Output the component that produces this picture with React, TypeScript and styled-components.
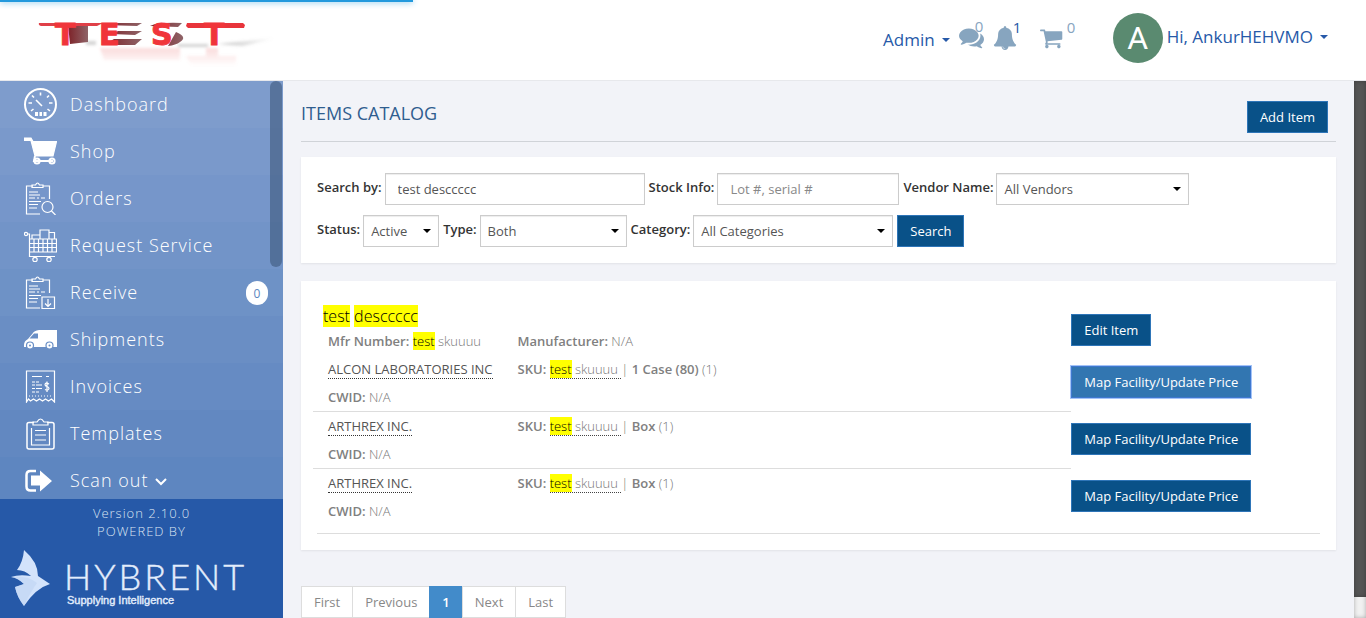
import React from "react";
import styled, { createGlobalStyle } from "styled-components";

const GlobalStyle = createGlobalStyle`
  *, *::before, *::after { box-sizing: border-box; }
  body {
    margin: 0;
    background: #f2f3f8;
    color: #777;
    font-family: "Open Sans", "Noto Sans", sans-serif;
    font-size: 13px;
  }
  button, input, select { font-family: inherit; font-size: inherit; }
  a { color: inherit; text-decoration: none; }
`;

const Page = styled.div`
  display: flex;
  flex-direction: column;
  height: 100vh;
  overflow: hidden;
`;

/* ---------- header ---------- */

const Progress = styled.div`
  position: absolute;
  top: 0;
  left: 0;
  width: 30.25%;
  height: 2px;
  background: #2299dd;
  box-shadow: 0 0 6px #2299dd;
`;

const Header = styled.header`
  display: flex;
  align-items: center;
  justify-content: space-between;
  flex: none;
  height: 81px;
  padding: 0 38px 5px;
  background: #fff;
  border-bottom: 1px solid #e7e8ec;
`;

const HeaderTools = styled.div`
  display: flex;
  align-items: center;
`;

const MenuButton = styled.button`
  display: flex;
  align-items: center;
  gap: 7px;
  padding: 0 0 2px;
  border: 0;
  background: none;
  color: #2659a8;
  font-size: 17px;
  line-height: 24px;
`;

const AdminMenu = styled(MenuButton)`
  margin: 6px 9px 0 0;
`;

const Caret = styled.span`
  border: 4px solid transparent;
  border-top-color: currentColor;
  border-bottom: 0;
`;

const IconButton = styled.button<{ $gap: number }>`
  position: relative;
  display: flex;
  margin-right: ${(p) => p.$gap}px;
  padding: 0;
  border: 0;
  background: none;
  color: #87a5bf;
`;

const Count = styled.span<{ $left: number; $active?: boolean }>`
  position: absolute;
  top: -9px;
  left: ${(p) => p.$left}px;
  color: ${(p) => (p.$active ? "#2659a8" : "#87a5bf")};
  font-size: 15px;
  line-height: 20px;
`;

const Avatar = styled.span`
  display: flex;
  align-items: center;
  justify-content: center;
  width: 50px;
  height: 50px;
  margin-right: 4px;
  border-radius: 50%;
  background: #5a8a70;
  color: #fff;
  font-family: Roboto, sans-serif;
  font-size: 32px;
`;

/* ---------- sidebar ---------- */

const Body = styled.div`
  display: flex;
  flex: 1;
  min-height: 0;
`;

const Sidebar = styled.aside`
  position: relative;
  display: flex;
  flex-direction: column;
  flex: none;
  width: 283px;
  color: #fff;
`;

const Nav = styled.nav`
  flex: 1;
  min-height: 0;
  overflow: hidden;
`;

const NavLink = styled.a<{ $bg: string }>`
  display: flex;
  align-items: center;
  height: 47px;
  padding: 0 15px 0 24px;
  background: ${(p) => p.$bg};
  color: #fff;
  font-size: 18px;
  font-weight: 300;
  letter-spacing: 1px;
`;

const NavText = styled.span`
  padding-bottom: 2px;
`;

const NavIcon = styled.svg`
  flex: none;
  width: 33px;
  height: 33px;
  margin-right: 13px;
  fill: none;
  stroke: #fff;
  stroke-width: 1.2;
`;

const NavBadge = styled.span`
  margin-left: auto;
  width: 22px;
  padding-top: 2px;
  border-radius: 11px;
  background: #fff;
  color: #5c86c0;
  font-size: 12px;
  font-weight: 400;
  line-height: 22px;
  letter-spacing: 0;
  text-align: center;
`;

const SideThumb = styled.div`
  position: absolute;
  top: 0;
  right: 1px;
  width: 12px;
  height: 186px;
  border-radius: 6px;
  background: rgba(62, 88, 124, 0.6);
`;

const SideFooter = styled.footer`
  flex: none;
  height: 119px;
  padding-top: 5px;
  background: #2659a8;
  color: #dbe4f2;
  font-size: 13px;
  font-weight: 300;
  line-height: 18px;
  letter-spacing: 1px;
  text-align: center;
`;

const Brand = styled.svg`
  display: block;
  width: 260px;
  height: 66px;
  margin-top: 6px;
`;

/* ---------- main ---------- */

const Main = styled.main`
  flex: 1;
  min-width: 0;
  padding: 0 18px;
`;

const TitleBar = styled.div`
  display: flex;
  align-items: flex-start;
  justify-content: space-between;
  padding: 20px 8px 8px 0;
  border-bottom: 1px solid #d0d3d8;
`;

const Title = styled.h1`
  margin: 0;
  color: #2f5d8f;
  font-size: 18px;
  font-weight: 400;
  line-height: 24px;
`;

const Button = styled.button<{ $focused?: boolean }>`
  height: 32px;
  padding: 0 12px;
  border: 1px solid ${(p) => (p.$focused ? "#3f78cf" : "#2e75b8")};
  background: ${(p) => (p.$focused ? "#3276b1" : "#095188")};
  box-shadow: ${(p) => (p.$focused ? "0 0 0 1px #a3c3f7" : "none")};
  color: #fff;
  font-weight: 500;
  line-height: 18px;
  white-space: nowrap;
`;

const Card = styled.section`
  margin-top: 15px;
  padding: 16px;
  background: #fff;
  box-shadow: 0 1px 2px rgba(0, 0, 0, 0.07);
`;

const ResultsCard = styled(Card)`
  margin-top: 18px;
  padding-top: 24px;
`;

const FilterRow = styled.div`
  display: flex;
  gap: 4px;
  & + & { margin-top: 10px; }
`;

const Field = styled.div`
  display: flex;
  gap: 3px;
`;

const Label = styled.label`
  color: #333;
  font-weight: 600;
  line-height: 28px;
  white-space: nowrap;
`;

const TextInput = styled.input<{ $w: number }>`
  width: ${(p) => p.$w}px;
  height: 32px;
  padding: 0 12px;
  border: 1px solid #ccc;
  box-shadow: inset 0 1px 1px rgba(0, 0, 0, 0.075);
  background: #fff;
  color: #555;
  &::placeholder { color: #888; }
`;

const SelectWrap = styled.span<{ $w: number }>`
  position: relative;
  width: ${(p) => p.$w}px;
`;

const Select = styled.select`
  appearance: none;
  width: 100%;
  height: 32px;
  padding: 0 20px 0 7px;
  border: 1px solid #ccc;
  border-radius: 0;
  box-shadow: inset 0 1px 1px rgba(0, 0, 0, 0.075);
  background: #fff;
  color: #555;
`;

const SelectCaret = styled(Caret)`
  position: absolute;
  top: 14px;
  right: 8px;
  color: #000;
  pointer-events: none;
`;

const List = styled.div`
  margin: 0 -4px;
`;

const Row = styled.div`
  display: grid;
  grid-template-columns: 3fr 1fr;
`;

const Details = styled.div<{ $line?: boolean }>`
  display: grid;
  grid-template-columns: 1fr 3fr;
  border-bottom: ${(p) => (p.$line ? "1px solid #ddd" : "0")};
  line-height: 28px;
  font-weight: 300;
`;

const Cell = styled.div`
  padding-left: 15px;
  white-space: nowrap;
`;

const Action = styled.div`
  padding-top: 11px;
`;

const EditAction = styled.div`
  padding-top: 9px;
`;

const ItemTitle = styled.h2`
  margin: 0;
  padding-left: 10px;
  font-size: 16px;
  font-weight: 300;
  line-height: 22px;
`;

const Mark = styled.mark`
  background: #ff0;
  color: #000;
`;

const Strong = styled.strong`
  color: #808080;
  font-weight: 600;
`;

const VendorLink = styled.a`
  border-bottom: 1px dotted #333;
  color: #555;
  font-weight: 400;
`;

const SkuLink = styled.a`
  border-bottom: 1px dotted #444;
`;

const Rule = styled.hr`
  margin: 8px 0 0;
  border: 0;
  border-top: 1px solid #ddd;
`;

const Pager = styled.nav`
  display: flex;
  margin-top: 36px;
`;

const PageLink = styled.a<{ $active?: boolean }>`
  height: 32px;
  padding: 0 12px;
  border: 1px solid ${(p) => (p.$active ? "#428bca" : "#ddd")};
  background: ${(p) => (p.$active ? "#428bca" : "#fff")};
  color: ${(p) => (p.$active ? "#fff" : "#888")};
  font-weight: ${(p) => (p.$active ? 600 : 400)};
  line-height: 30px;
  & + & { margin-left: -1px; }
`;

const ScrollTrack = styled.div`
  flex: none;
  width: 12px;
  background: #f1f1f1;
  box-shadow: inset 0 0 4px rgba(0, 0, 0, 0.3);
`;

const ScrollThumb = styled.div`
  height: 96%;
  background: #555;
  box-shadow: inset 0 0 4px rgba(0, 0, 0, 0.3);
`;

/* ---------- drawings ---------- */

const TestLogo = () => (
  <svg width="245" height="60" viewBox="0 0 245 60" role="img" aria-label="TEST">
    <defs>
      <linearGradient id="shade" x1="0" x2="1">
        <stop offset="0" stopColor="#888" stopOpacity="0.5" />
        <stop offset="1" stopColor="#888" stopOpacity="0" />
      </linearGradient>
      <linearGradient id="glow" x1="0" x2="0" y1="0" y2="1">
        <stop offset="0" stopColor="#e88" stopOpacity="0.3" />
        <stop offset="1" stopColor="#e88" stopOpacity="0" />
      </linearGradient>
      <linearGradient id="side" x1="0" x2="1">
        <stop offset="0" stopColor="#7d2228" />
        <stop offset="1" stopColor="#8f6468" />
      </linearGradient>
      <filter id="soft" x="-10%" y="-50%" width="120%" height="200%">
        <feGaussianBlur stdDeviation="1.500" />
      </filter>
    </defs>
    <g filter="url(#soft)">
      <path d="M180 36 L238 30 L205 38 Z" fill="url(#shade)" />
      <path d="M48 33h10v4H48zM140 36h30v3h-30z" fill="#aaa" opacity=".5" />
      <path d="M62 40h80v12H66zM148 48h50v10h-44zM168 40h12v8h-12z" fill="url(#glow)" />
    </g>
    <path d="M30 17h20v17l-18 2z" fill="url(#side)" />
    <path d="M1 15h64l-6 3H3q-3-1-2-3z" fill="#e04048" />
    <path d="M149 15h56l2 2-1 3h-56l-2-2z" fill="#e8343b" />
    <path d="M66 17l8-2h30l-5 3zM74 26l6-3h24l-7 4zM66 37l10-6h28l-7 6z" fill="url(#side)" />
    <path d="M112 18q8-4 32-3l-4 4zM138 24q12 5 4 10-4 3-12 4z" fill="url(#side)" />
    <text x="17 61 113 166" y="37" fontFamily="DejaVu Sans" fontWeight="700" fontSize="30" fill="#f0353a" stroke="#f0353a" strokeWidth="1">
      TEST
    </text>
  </svg>
);

const clip = (
  <>
    <path d="M9 4H2.500V32H16M19 4h6.500V17" />
    <path d="M8 5V3h3.500q2-4 4 0H19v2.500H8z" />
    <path d="M5 10h9M5 13h11M5 16h6m2 0h2m2 0h4M5 19.500h12M5 22.500h9M5 26h8" />
  </>
);

const icons: Record<string, React.ReactNode> = {
  dashboard: (
    <>
      <circle cx="16.500" cy="16.500" r="15.500" strokeWidth="2" />
      <path strokeWidth="1.600" d="M16.500 4.500v3M4.500 15h3.500M25 15h3.500M8 7.500l2 2M25 7.500l-2 2M7 23l2.500-2M26 23l-2.500-2M12 12l6 6" />
      <path strokeWidth="4" d="M11 26h3M15.500 26h2.500M19.500 26h3" />
    </>
  ),
  shop: (
    <>
      <path d="M0 3h7l2 3.500h23.500L29 21H11L7 5.500H0z" fill="#fff" />
      <path d="M11 21l-1 5h19" strokeWidth="2" />
      <circle cx="13" cy="26" r="2.600" strokeWidth="2" />
      <circle cx="28" cy="26" r="2.600" strokeWidth="2" />
    </>
  ),
  orders: (
    <>
      {clip}
      <circle cx="23.500" cy="25" r="5.500" />
      <path d="M27.500 29l4 4" />
    </>
  ),
  request: (
    <>
      <circle cx="2" cy="5" r="1.600" />
      <path d="M4 5h1.500V27.500H31M5.500 10h27v13H5.500zM8 10V6h8M16 10V1h9v9M25 3.500h5.500V10M5.500 14.500h27M5.500 18.500h27M10 10v13M14.500 10v13M19 10v13M23.500 10v13M28 10v13" />
      <circle cx="11" cy="30.500" r="2.200" />
      <circle cx="25" cy="30.500" r="2.200" />
    </>
  ),
  receive: (
    <>
      {clip}
      <path d="M18 21h12.500v11.500H18zM24 23v7M21 27.500l3 3 3-3" />
    </>
  ),
  shipments: (
    <>
      <path d="M0 22q0-4 4-6l5-6q1-2 6-3h18v17H0z" fill="#fff" stroke="none" />
      <path d="M5.500 15.500L10 10.500h4v5z" fill="#688ec5" stroke="none" />
      <circle cx="6" cy="22.500" r="3.500" fill="#fff" stroke="#688ec5" />
      <circle cx="25.500" cy="22.500" r="3.500" fill="#fff" stroke="#688ec5" />
      <circle cx="6" cy="22.500" r="1" fill="#688ec5" stroke="none" />
      <circle cx="25.500" cy="22.500" r="1" fill="#688ec5" stroke="none" />
    </>
  ),
  invoices: (
    <>
      <path d="M2.500 32V1h28v31l-3-3-3 2-3-2-3 2-3-2-3 2-3-2-3 2-2-2z" />
      <path d="M8 6.500h10M22 6.500h3M8 12h3m1 0h3M8 15h3m1 0h6M8 18.500h3m1 0h6M8 22h3m1 0h3" />
      <path d="M5 26h24" strokeDasharray="1 2" />
      <path d="M25 14q-3.500-2-4 .5 0 1.500 2 2t2 2q-.5 2.500-4 1M23 11.500v10.500" />
    </>
  ),
  templates: (
    <>
      <path d="M10 5.500H5q-2 0-2 2V30q0 2 2 2h23q2 0 2-2V7.500q0-2-2-2h-5" strokeWidth="1.500" />
      <path d="M9 8h15V5h-4q-3.500-6-7 0H9zM7.500 11v17h18V11M11 13.500h11M11 18h11M11 23h11" />
    </>
  ),
  scanout: (
    <>
      <path d="M12 7H6.500q-4 0-4 4v11.500q0 4 4 4H12" strokeWidth="2.500" />
      <path d="M7 11.500h9V6.500L28 17 16 27.500V21.500H7z" fill="#fff" stroke="none" />
    </>
  ),
};

const NAV = [
  { label: "Dashboard", icon: "dashboard", bg: "#7e9ccc" },
  { label: "Shop", icon: "shop", bg: "#7a99cb" },
  { label: "Orders", icon: "orders", bg: "#7696ca" },
  { label: "Request Service", icon: "request", bg: "#7294c8" },
  { label: "Receive", icon: "receive", bg: "#6e92c6", badge: 0 },
  { label: "Shipments", icon: "shipments", bg: "#6a8ec4" },
  { label: "Invoices", icon: "invoices", bg: "#668bc3" },
  { label: "Templates", icon: "templates", bg: "#6288c1" },
  { label: "Scan out", icon: "scanout", bg: "#5e86c0", expands: true },
];

const VENDORS = [
  { name: "ALCON LABORATORIES INC", unit: "1 Case (80)", focused: true },
  { name: "ARTHREX INC.", unit: "Box" },
  { name: "ARTHREX INC.", unit: "Box" },
];

const PAGES = ["First", "Previous", "1", "Next", "Last"];

function Picker({ id, label, width, value }: { id: string; label: string; width: number; value: string }) {
  return (
    <Field>
      <Label htmlFor={id}>{label}</Label>
      <SelectWrap $w={width}>
        <Select id={id}>
          <option>{value}</option>
        </Select>
        <SelectCaret />
      </SelectWrap>
    </Field>
  );
}

export default function App() {
  return (
    <Page>
      <GlobalStyle />
      <Header>
        <TestLogo />
        <HeaderTools>
          <AdminMenu>
            Admin <Caret />
          </AdminMenu>
          <IconButton $gap={9} aria-label="Messages">
            <svg width="25" height="25" viewBox="0 0 1792 1792" fill="currentColor">
              <path d="M1408 768q0 139-94 257t-256.500 186.500-353.500 68.500q-86 0-176-16-124 88-278 128-36 9-86 16h-3q-11 0-20.500-8t-11.500-21q-1-3-1-6.500t.5-6.500 2-6l2.500-5 3.500-5.500 4-5 4.500-5 4-4.500q5-6 23-25t26-29.500 22.500-29 25-38.500 20.500-44q-124-72-195-177t-71-224q0-139 94-257t256.500-186.500 353.500-68.500 353.500 68.500 256.500 186.500 94 257zm384 256q0 120-71 224.500t-195 176.500q10 24 20.500 44t25 38.500 22.500 29 26 29.500 23 25q1 1 4 4.500t4.500 5 4 5 3.500 5.500l2.500 5 2 6 .5 6.500-1 6.500q-3 14-13 22t-22 7q-50-7-86-16-154-40-278-128-90 16-176 16-271 0-472-132 58 4 88 4 161 0 309-45t264-129q125-92 192-212t67-254q0-77-23-152 129 71 204 178t75 230z" />
            </svg>
            <Count $left={16}>0</Count>
          </IconButton>
          <IconButton $gap={23} aria-label="Notifications">
            <svg width="24" height="24" viewBox="0 0 1792 1792" fill="currentColor">
              <path d="M912 1696q0-16-16-16-59 0-101.500-42.500t-42.500-101.500q0-16-16-16t-16 16q0 73 51.500 124.500t124.500 51.500q16 0 16-16zm816-288q0 52-38 90t-90 38h-448q0 106-75 181t-181 75-181-75-75-181h-448q-52 0-90-38t-38-90q50-42 91-88t85-119.500 74.500-158.500 50-206 19.500-260q0-152 117-282.500t307-158.500q-8-19-8-39 0-40 28-68t68-28 68 28 28 68q0 20-8 39 190 28 307 158.500t117 282.500q0 139 19.500 260t50 206 74.500 158.500 85 119.500 91 88z" />
            </svg>
            <Count $left={20} $active>1</Count>
          </IconButton>
          <IconButton $gap={49} aria-label="Cart">
            <svg width="24" height="24" viewBox="0 0 1792 1792" fill="currentColor">
              <path d="M640 1536q0 52-38 90t-90 38-90-38-38-90 38-90 90-38 90 38 38 90zm896 0q0 52-38 90t-90 38-90-38-38-90 38-90 90-38 90 38 38 90zm128-1088v512q0 24-16.500 42.500t-40.500 21.500l-1044 122q13 60 13 70 0 16-24 64h920q26 0 45 19t19 45-19 45-45 19h-1024q-26 0-45-19t-19-45q0-11 8-31.500t16-36 21.500-40 15.500-29.500l-177-823h-204q-26 0-45-19t-19-45 19-45 45-19h256q16 0 28.500 6.500t19.500 15.500 13 24.500 8 26 5.500 29.500 4.500 26h1201q26 0 45 19t19 45z" />
            </svg>
            <Count $left={27}>0</Count>
          </IconButton>
          <Avatar>A</Avatar>
          <MenuButton>
            Hi, AnkurHEHVMO <Caret />
          </MenuButton>
        </HeaderTools>
      </Header>
      <Progress />

      <Body>
        <Sidebar>
          <Nav>
            {NAV.map((n) => (
              <NavLink key={n.label} href="#" $bg={n.bg}>
                <NavIcon viewBox="0 0 33 33">{icons[n.icon]}</NavIcon>
                <NavText>{n.label}</NavText>
                {n.badge !== undefined && <NavBadge>{n.badge}</NavBadge>}
                {n.expands && (
                  <svg width="20" height="12" viewBox="0 0 20 12" fill="none" stroke="#fff" strokeWidth="2">
                    <path d="M8 4l5 5 5-5" />
                  </svg>
                )}
              </NavLink>
            ))}
          </Nav>
          <SideFooter>
            <div>Version 2.10.0</div>
            <div>POWERED BY</div>
            <Brand viewBox="0 0 260 66" role="img" aria-label="Hybrent, Supplying Intelligence">
              <path d="M24 4q14 12 14 26l12 8q-14 4-26 22-7-9-9-19l9-3q-6-6-13-7 8-3 20-1-6-6-14-6 6-8 7-20z" fill="#d3e3fb" />
              <path d="M11 31q16-2 26 6-6 8-13 23-7-9-9-19l9-3q-6-6-13-7z" fill="#bfd3f3" opacity=".6" />
              <g fill="#e3edfc">
                <text x="64" y="44" fontFamily="Lato" fontWeight="300" fontSize="36" letterSpacing="3" stroke="#e3edfc" strokeWidth=".4">HYBRENT</text>
                <text x="67" y="58" fontFamily="Liberation Sans" fontSize="11" letterSpacing="0" stroke="#e3edfc" strokeWidth=".4">Supplying Intelligence</text>
              </g>
            </Brand>
          </SideFooter>
          <SideThumb />
        </Sidebar>

        <Main>
          <TitleBar>
            <Title>ITEMS CATALOG</Title>
            <Button>Add Item</Button>
          </TitleBar>

          <Card>
            <FilterRow>
              <Field>
                <Label htmlFor="q">Search by:</Label>
                <TextInput id="q" $w={260} defaultValue="test desccccc" />
              </Field>
              <Field>
                <Label htmlFor="stock">Stock Info:</Label>
                <TextInput id="stock" $w={182} placeholder="Lot #, serial #" />
              </Field>
              <Picker id="vendor" label="Vendor Name:" width={193} value="All Vendors" />
            </FilterRow>
            <FilterRow>
              <Picker id="status" label="Status:" width={76} value="Active" />
              <Picker id="type" label="Type:" width={147} value="Both" />
              <Picker id="category" label="Category:" width={200} value="All Categories" />
              <Button>Search</Button>
            </FilterRow>
          </Card>

          <ResultsCard>
            <List>
              <Row>
                <div>
                  <ItemTitle>
                    <Mark>test</Mark> <Mark>desccccc</Mark>
                  </ItemTitle>
                  <Details>
                    <Cell>
                      <Strong>Mfr Number:</Strong> <Mark>test</Mark> skuuuu
                    </Cell>
                    <Cell>
                      <Strong>Manufacturer:</Strong> N/A
                    </Cell>
                  </Details>
                </div>
                <EditAction>
                  <Button>Edit Item</Button>
                </EditAction>
              </Row>
              {VENDORS.map((v, i) => (
                <Row key={i}>
                  <Details $line={i < VENDORS.length - 1}>
                    <Cell>
                      <VendorLink href="#">{v.name}</VendorLink>
                      <div>
                        <Strong>CWID:</Strong> N/A
                      </div>
                    </Cell>
                    <Cell>
                      <Strong>SKU:</Strong>{" "}
                      <SkuLink href="#">
                        <Mark>test</Mark> skuuuu{" "}
                      </SkuLink>
                      | <Strong>{v.unit}</Strong> (1)
                    </Cell>
                  </Details>
                  <Action>
                    <Button $focused={v.focused}>Map Facility/Update Price</Button>
                  </Action>
                </Row>
              ))}
            </List>
            <Rule />
          </ResultsCard>

          <Pager aria-label="Pages">
            {PAGES.map((p) => (
              <PageLink key={p} href="#" $active={p === "1"}>
                {p}
              </PageLink>
            ))}
          </Pager>
        </Main>
        <ScrollTrack>
          <ScrollThumb />
        </ScrollTrack>
      </Body>
    </Page>
  );
}
